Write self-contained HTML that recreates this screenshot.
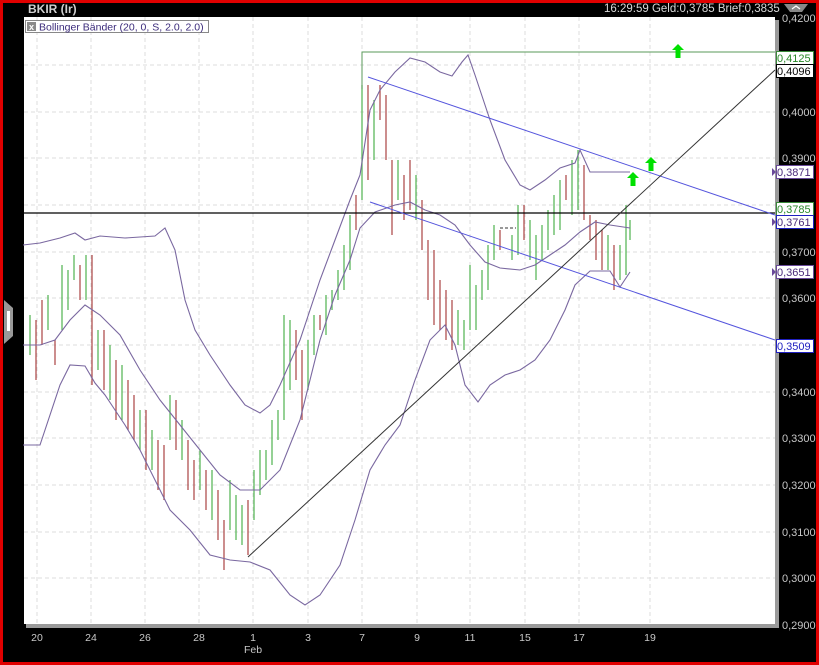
<!DOCTYPE html>
<html><head><meta charset="utf-8"><style>
html,body{margin:0;padding:0;background:#000;}
svg{display:block;}
text{font-family:"Liberation Sans",sans-serif;}
</style></head><body>
<svg width="819" height="665" viewBox="0 0 819 665" xmlns="http://www.w3.org/2000/svg">
<rect x="0" y="0" width="819" height="665" fill="#000"/>
<rect x="1.5" y="1.5" width="816" height="662" fill="none" stroke="#e00000" stroke-width="3"/>
<!-- plot shadow -->
<rect x="26" y="20" width="753" height="608" fill="#9a9a9a"/>
<rect x="24" y="17" width="751" height="607" fill="#fff"/>
<!-- grid -->
<g stroke="#dcdcdc" stroke-width="1" stroke-dasharray="4,3">
<line x1="24" x2="775" y1="65" y2="65"/><line x1="24" x2="775" y1="112" y2="112"/>
<line x1="24" x2="775" y1="158" y2="158"/><line x1="24" x2="775" y1="205" y2="205"/>
<line x1="24" x2="775" y1="252" y2="252"/><line x1="24" x2="775" y1="298" y2="298"/>
<line x1="24" x2="775" y1="345" y2="345"/><line x1="24" x2="775" y1="392" y2="392"/>
<line x1="24" x2="775" y1="438" y2="438"/><line x1="24" x2="775" y1="485" y2="485"/>
<line x1="24" x2="775" y1="532" y2="532"/><line x1="24" x2="775" y1="578" y2="578"/>
<line y1="17" y2="624" x1="37" x2="37"/><line y1="17" y2="624" x1="91" x2="91"/>
<line y1="17" y2="624" x1="145" x2="145"/><line y1="17" y2="624" x1="199" x2="199"/>
<line y1="17" y2="624" x1="253" x2="253"/><line y1="17" y2="624" x1="308" x2="308"/>
<line y1="17" y2="624" x1="362" x2="362"/><line y1="17" y2="624" x1="417" x2="417"/>
<line y1="17" y2="624" x1="470" x2="470"/><line y1="17" y2="624" x1="525" x2="525"/>
<line y1="17" y2="624" x1="579" x2="579"/><line y1="17" y2="624" x1="650" x2="650"/>
</g>
<!-- bars -->
<g stroke-width="1.3">
<path stroke="#5cb85c" d="M30 315V355M48 295V330M62 265V330M68 270V310M74 255V280M86 255V300M98 330V370M110 345V400M122 365V420M140 410V450M152 430V470M170 395V440M182 420V460M200 450V490M212 470V520M230 480V530M236 495V540M242 505V545M254 470V520M260 450V495M266 450V480M272 420V465M278 410V440M284 315V420M290 320V390M308 340V390M314 315V355M326 295V335M332 290V310M338 270V300M344 245V290M350 215V270M362 85V200M374 100V160M398 160V200M416 175V220M458 310V345M464 320V350M470 265V330M476 285V330M482 270V300M488 245V290M494 225V260M512 235V260M518 205V255M530 220V260M536 235V280M542 225V260M548 210V250M554 195V235M560 180V230M572 160V215M578 150V210M608 235V270M620 245V280M626 205V275M630 220V240"/>
<path stroke="#b05050" d="M36 320V380M42 300V345M55 340V365M80 265V300M92 255V385M104 330V390M116 360V420M128 380V430M134 395V440M146 410V470M158 440V490M164 445V500M176 400V450M188 440V490M194 460V500M206 470V510M218 490V540M224 520V570M248 500V555M296 330V380M302 350V420M320 315V330M356 195V230M368 85V180M380 85V120M386 95V160M392 160V235M404 175V220M410 160V210M422 200V250M428 240V300M434 250V325M440 280V330M446 290V340M452 300V350M500 230V250M524 205V240M566 175V200M584 165V220M590 215V240M596 220V260M602 230V270M614 245V290"/>
<path stroke="#333" d="M500 228H516" stroke-dasharray="3,2" stroke-width="1"/>
</g>
<!-- bollinger -->
<g fill="none" stroke="#7a68a0" stroke-width="1.1">
<polyline points="23,245 40,243 60,238 75,233 85,240 100,236 125,238 155,236 165,228 175,250 185,300 195,330 210,355 230,385 245,405 260,413 270,405 280,385 300,340 320,280 335,240 350,200 360,175 370,110 380,90 395,72 410,58 425,62 440,72 452,76 462,62 468,55 475,75 490,120 505,160 520,185 530,190 545,180 560,168 575,163 580,150 590,172 610,172 630,172"/>
<polyline points="23,345 40,345 55,340 70,320 85,305 100,315 120,335 140,370 160,400 180,425 200,450 220,475 240,490 260,490 280,470 300,420 320,340 335,295 350,260 360,228 375,212 395,205 410,202 425,210 440,215 455,225 470,245 485,262 500,268 520,270 535,265 550,255 565,245 580,232 595,222 610,225 630,228"/>
<polyline points="23,445 40,445 60,385 70,365 85,366 95,383 105,395 115,410 125,425 140,450 155,480 170,510 190,530 210,555 230,560 250,562 270,570 290,595 305,605 320,595 340,565 355,520 370,470 385,445 400,425 415,380 430,340 445,325 455,345 465,385 478,402 490,385 505,375 520,370 535,360 550,340 565,310 575,285 590,271 610,271 620,287 630,272"/>
</g>
<!-- lines -->
<line x1="24" x2="775" y1="213" y2="213" stroke="#000" stroke-width="1.2"/>
<polyline points="362,89 362,52 775,52" fill="none" stroke="#5a9a5a" stroke-width="1"/>
<line x1="368" y1="77" x2="775" y2="215" stroke="#5555dd" stroke-width="1"/>
<line x1="370" y1="202" x2="775" y2="340" stroke="#5555dd" stroke-width="1"/>
<line x1="248" y1="557" x2="775" y2="70" stroke="#333" stroke-width="1"/>
<!-- arrows -->
<g fill="#00e000">
<path d="M678 44l6 6h-3.5v8h-5v-8h-3.5z"/>
<path d="M651 157l6 6h-3.5v8h-5v-8h-3.5z"/>
<path d="M633 172l6 6h-3.5v8h-5v-8h-3.5z"/>
</g>
<!-- title -->
<text x="28" y="13" font-size="12" font-weight="bold" fill="#cfcfcf">BKIR (Ir)</text>
<text x="604" y="12" font-size="11.5" fill="#d8d8d8">16:29:59  Geld:0,3785  Brief:0,3835</text>
<path d="M784 4h24l-6 8h-12z" fill="#888"/><path d="M792 9l4-3 4 3" fill="none" stroke="#fff" stroke-width="1.2"/>
<rect x="25.5" y="20.5" width="183" height="12" fill="#fff" stroke="#888"/>
<rect x="27" y="22" width="9" height="9" fill="#8a8a8a"/>
<text x="29" y="30" font-size="9" fill="#fff" font-weight="bold">x</text>
<text x="39" y="30.5" font-size="10.5" fill="#3a2a7a">Bollinger Bänder (20, 0, S, 2.0, 2.0)</text>
<!-- left handle -->
<path d="M4 300l9 8v28l-9 8z" fill="#999"/><rect x="7" y="311" width="3" height="20" fill="#fff"/>
<!-- axis labels -->
<g font-size="11" fill="#c8c8c8">
<text x="782" y="22">0,4200</text><text x="782" y="116">0,4000</text>
<text x="782" y="162">0,3900</text><text x="782" y="256">0,3700</text>
<text x="782" y="302">0,3600</text><text x="782" y="396">0,3400</text>
<text x="782" y="442">0,3300</text><text x="782" y="489">0,3200</text>
<text x="782" y="536">0,3100</text><text x="782" y="582">0,3000</text>
<text x="782" y="629">0,2900</text>
</g>
<g font-size="11">
<rect x="776.5" y="51.5" width="37" height="13" fill="#fff" stroke="#3a8a3a"/><text x="777" y="62" fill="#2a8a2a">0,4125</text>
<rect x="776.5" y="64.5" width="37" height="13" fill="#fff" stroke="#000"/><text x="777" y="75" fill="#000">0,4096</text>
<rect x="776.5" y="165.5" width="37" height="13" fill="#fff" stroke="#6a4a9a"/><text x="777" y="176" fill="#4a2a7a">0,3871</text>
<rect x="776.5" y="202.5" width="37" height="13" fill="#fff" stroke="#3a8a3a"/><text x="777" y="213" fill="#2a8a2a">0,3785</text>
<rect x="776.5" y="215.5" width="37" height="13" fill="#fff" stroke="#2020c0"/><text x="777" y="226" fill="#4a2a7a">0,3761</text>
<rect x="776.5" y="265.5" width="37" height="13" fill="#fff" stroke="#6a4a9a"/><text x="777" y="276" fill="#4a2a7a">0,3651</text>
<rect x="776.5" y="339.5" width="37" height="13" fill="#fff" stroke="#2020c0"/><text x="777" y="350" fill="#2020c0">0,3509</text>
</g>
<g fill="#6a4a9a"><path d="M772 168v8l4-4z"/><path d="M772 218v8l4-4z"/><path d="M772 268v8l4-4z"/></g>
<!-- date labels -->
<g font-size="10.5" fill="#c8c8c8" text-anchor="middle">
<text x="37" y="641">20</text><text x="91" y="641">24</text><text x="145" y="641">26</text>
<text x="199" y="641">28</text><text x="253" y="641">1</text><text x="308" y="641">3</text>
<text x="362" y="641">7</text><text x="417" y="641">9</text><text x="470" y="641">11</text>
<text x="525" y="641">15</text><text x="579" y="641">17</text><text x="650" y="641">19</text>
<text x="253" y="653">Feb</text>
</g>
</svg>
</body></html>
